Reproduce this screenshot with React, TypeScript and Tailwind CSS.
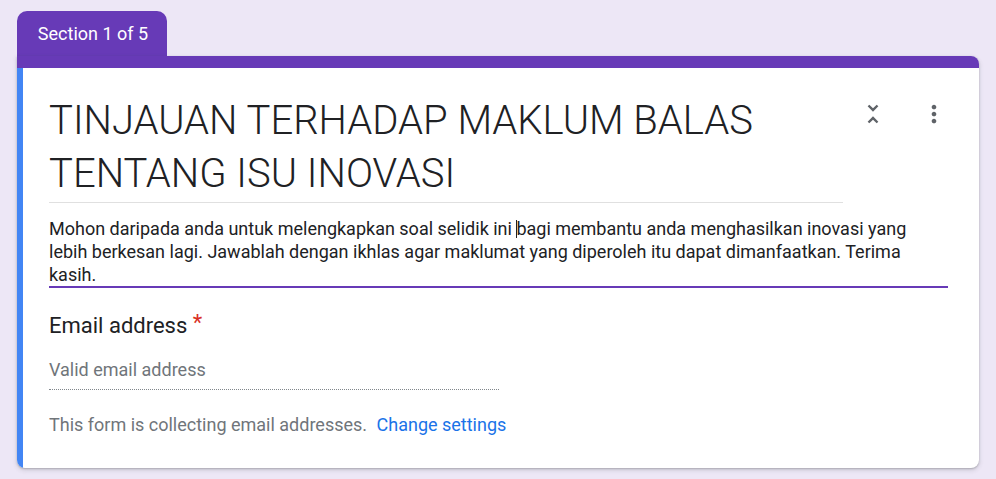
import React from "react";

export default function App() {
  return (
    <div className="w-full h-[479px] bg-[#ede7f6] px-[17px] pt-[11px] overflow-hidden" style={{ fontFamily: "Roboto, 'Liberation Sans', sans-serif" }}>
      <div className="w-[150px] h-[45px] bg-[#673ab7] rounded-t-[10px] flex items-center justify-center text-white text-[18px] pl-[2px]">
        Section 1 of 5
      </div>
      <div className="bg-white rounded-b-lg rounded-tr-lg overflow-hidden shadow-[0_1px_2px_rgba(60,64,67,0.3),0_2px_4px_1px_rgba(60,64,67,0.12)]">
        <div className="h-[12px] bg-[#673ab7]" />
        <div className="flex border-l-[6px] border-[#4285f4] pl-[26px] pr-[31px] pt-[26px] pb-[31px]">
          <div className="flex-1 min-w-0">
            <div className="flex">
              <div className="w-[794px] border-b border-[#e0e0e0] pb-[2px]">
                <div className="text-[40px] leading-[53px] text-[#202124]" style={{ fontFamily: "Roboto, sans-serif", fontWeight: 300 }}>
                  TINJAUAN TERHADAP MAKLUM BALAS TENTANG ISU INOVASI
                </div>
              </div>
              <div className="flex-1 flex items-start justify-end gap-[33px] pt-[6px] pr-[0px]">
                <svg width="28" height="28" viewBox="0 0 24 24" fill="#5f6368">
                  <path d="M7.41 18.59L8.83 20 12 16.83 15.17 20l1.41-1.41L12 14l-4.59 4.59zm9.18-13.18L15.17 4 12 7.17 8.83 4 7.41 5.41 12 10l4.59-4.59z" />
                </svg>
                <svg width="28" height="28" viewBox="0 0 24 24" fill="#5f6368">
                  <path d="M12 8c1.1 0 2-.9 2-2s-.9-2-2-2-2 .9-2 2 .9 2 2 2zm0 2c-1.1 0-2 .9-2 2s.9 2 2 2 2-.9 2-2-.9-2-2-2zm0 6c-1.1 0-2 .9-2 2s.9 2 2 2 2-.9 2-2-.9-2-2-2z" />
                </svg>
              </div>
            </div>
            <div className="mt-[14px] border-b-2 border-[#673ab7] text-[18px] leading-[23px] text-[#202124]">
              Mohon daripada anda untuk melengkapkan soal selidik ini <span className="inline-block w-px h-[18px] bg-[#202124] align-[-3px] -mr-px" />bagi membantu anda menghasilkan inovasi yang lebih berkesan lagi. Jawablah dengan ikhlas agar maklumat yang diperoleh itu dapat dimanfaatkan. Terima kasih.
            </div>
            <div className="mt-[23px] text-[22px] leading-[30px] text-[#202124]">
              Email address <span className="text-[#d93025] relative top-[-3px]">*</span>
            </div>
            <div className="mt-[17px] w-[450px] border-b border-dotted border-[#80868b] pb-[7px] text-[18px] leading-[24px] text-[#70757a]">
              Valid email address
            </div>
            <div className="mt-[23px] text-[18px] leading-[24px] text-[#70757a]">
              This form is collecting email addresses.{" "}
              <span className="text-[#1a73e8] ml-[5px]">Change settings</span>
            </div>
          </div>
        </div>
      </div>
    </div>
  );
}
